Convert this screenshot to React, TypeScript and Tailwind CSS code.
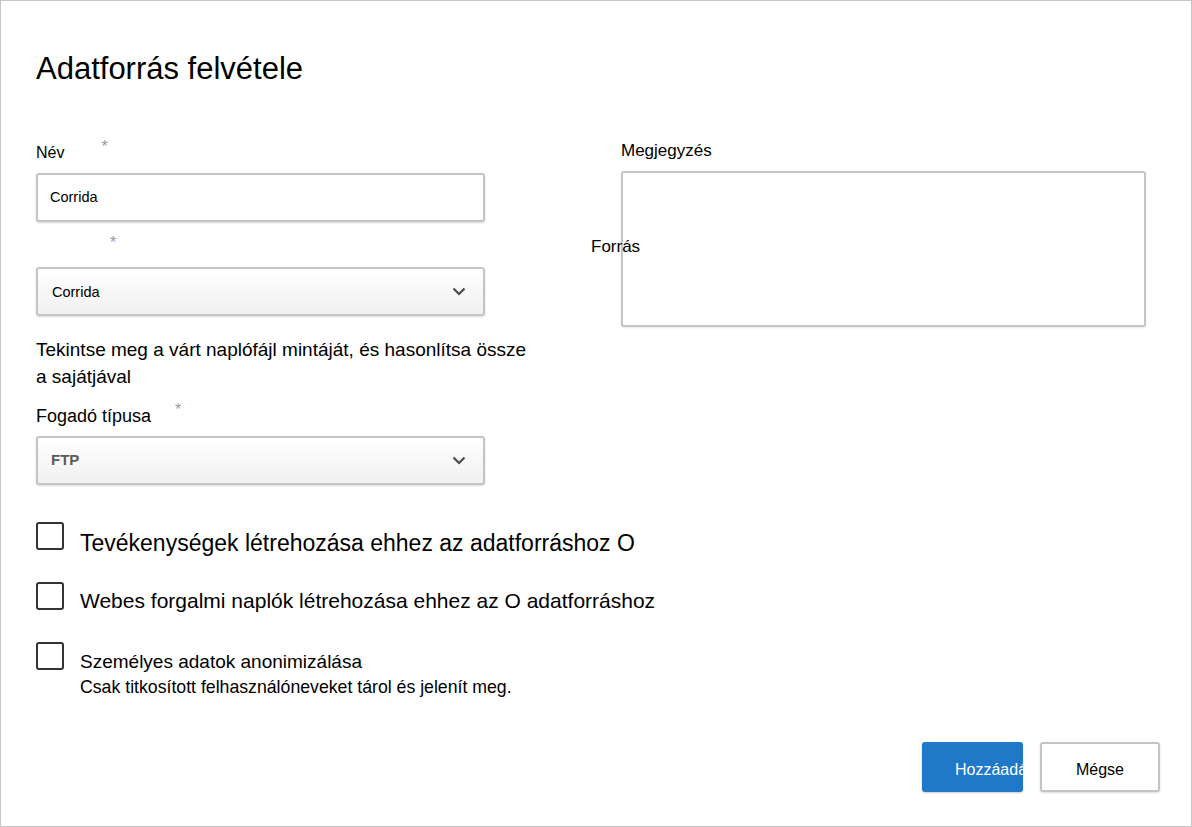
import React from 'react';

function Chevron() {
  return (
    <svg width="14" height="9" viewBox="0 0 14 9" className="shrink-0">
      <polyline points="1.5,1.5 7,7 12.5,1.5" fill="none" stroke="#4a4a4a" strokeWidth="2.2" />
    </svg>
  );
}

function Checkbox({ label, size, pt, h, sub }: { label: string; size: string; pt: string; h?: string; sub?: string }) {
  return (
    <div className={`flex items-start gap-4 ${h || ''}`}>
      <div className="w-[28px] h-[28px] shrink-0 border-2 border-[#333] rounded-[3px] bg-white" />
      <div className={pt}>
        <p className={`${size} text-black leading-[24px] whitespace-nowrap`}>{label}</p>
        {sub && <p className="text-[17.7px] text-black leading-[22px] mt-[2px] whitespace-nowrap">{sub}</p>}
      </div>
    </div>
  );
}

export default function App() {
  const boxClass = 'w-[449px] h-[49px] border-2 border-[#c4c4c4] rounded-[3px] shadow-[0_1px_2px_rgba(0,0,0,0.15)]';

  return (
    <div className="w-[1192px] h-[827px] bg-white border border-[#c6c6c6] font-['Liberation_Sans',Arial,sans-serif] text-black overflow-hidden">
      <div className="pl-[35px] pt-[48px]">
        <h1 className="text-[31px] leading-[40px] font-normal">Adatforrás felvétele</h1>

        <div className="relative flex mt-[54px]">
          {/* left column */}
          <div className="w-[585px]">
            <div className="flex items-start h-[30px]">
              <span className="text-[16px] leading-[20px]">Név</span>
              <span className="ml-[37px] -mt-[8px] text-[16px] text-[#9a9a9a]">*</span>
            </div>
            <div className={`${boxClass} bg-white flex items-center px-[12px]`}>
              <span className="text-[14.5px]">Corrida</span>
            </div>

            <div className="h-[45px] relative">
              <span className="absolute left-[74px] top-[9px] text-[16px] text-[#9a9a9a]">*</span>
            </div>
            <div className={`${boxClass} bg-gradient-to-b from-white to-[#f0f0f0] flex items-center justify-between pl-[14px] pr-[17px]`}>
              <span className="text-[14.5px] mt-[3px]">Corrida</span>
              <Chevron />
            </div>

            <p className="w-[500px] mt-[20px] text-[19px] leading-[27px]">
              Tekintse meg a várt naplófájl mintáját, és hasonlítsa össze a sajátjával
            </p>

            <div className="flex items-start mt-[14px] h-[32px]">
              <span className="text-[18px] leading-[24px]">Fogadó típusa</span>
              <span className="ml-[24px] -mt-[6px] text-[16px] text-[#9a9a9a]">*</span>
            </div>
            <div className={`${boxClass} bg-gradient-to-b from-white to-[#f0f0f0] flex items-center justify-between pl-[13px] pr-[17px]`}>
              <span className="text-[15px] font-bold text-[#5a5a5a]">FTP</span>
              <Chevron />
            </div>
          </div>

          {/* right column */}
          <div>
            <div className="h-[30px]">
              <span className="block -mt-[2px] text-[17px] leading-[20px]">Megjegyzés</span>
            </div>
            <div className="w-[525px] h-[156px] border-2 border-[#c4c4c4] rounded-[3px] bg-white shadow-[0_1px_2px_rgba(0,0,0,0.1)]" />
          </div>

          <span className="absolute left-[555px] top-[94px] text-[17px] leading-[20px]">Forrás</span>
        </div>

        <div className="mt-[37px] flex flex-col">
          <Checkbox label="Tevékenységek létrehozása ehhez az adatforráshoz O" size="text-[23px]" pt="pt-[9px]" h="h-[60px]" />
          <Checkbox label="Webes forgalmi naplók létrehozása ehhez az O adatforráshoz" size="text-[21px]" pt="pt-[7px]" h="h-[60px]" />
          <Checkbox
            label="Személyes adatok anonimizálása"
            size="text-[19px]"
            pt="pt-[8px]"
            sub="Csak titkosított felhasználóneveket tárol és jelenít meg."
          />
        </div>
      </div>

      <div className="flex justify-end gap-[17px] pr-[31px] mt-[44px]">
        <button className="w-[101px] h-[50px] bg-[#1f78c8] rounded-[3px] overflow-hidden flex items-center pl-[33px] pt-[6px] shadow-[0_1px_2px_rgba(0,0,0,0.2)]">
          <span className="text-[16px] text-white whitespace-nowrap">Hozzáadás</span>
        </button>
        <button className="w-[120px] h-[50px] bg-white border-2 border-[#c4c4c4] rounded-[3px] shadow-[0_1px_2px_rgba(0,0,0,0.15)] flex items-center justify-center pt-[6px]">
          <span className="text-[16px] text-black">Mégse</span>
        </button>
      </div>
    </div>
  );
}
